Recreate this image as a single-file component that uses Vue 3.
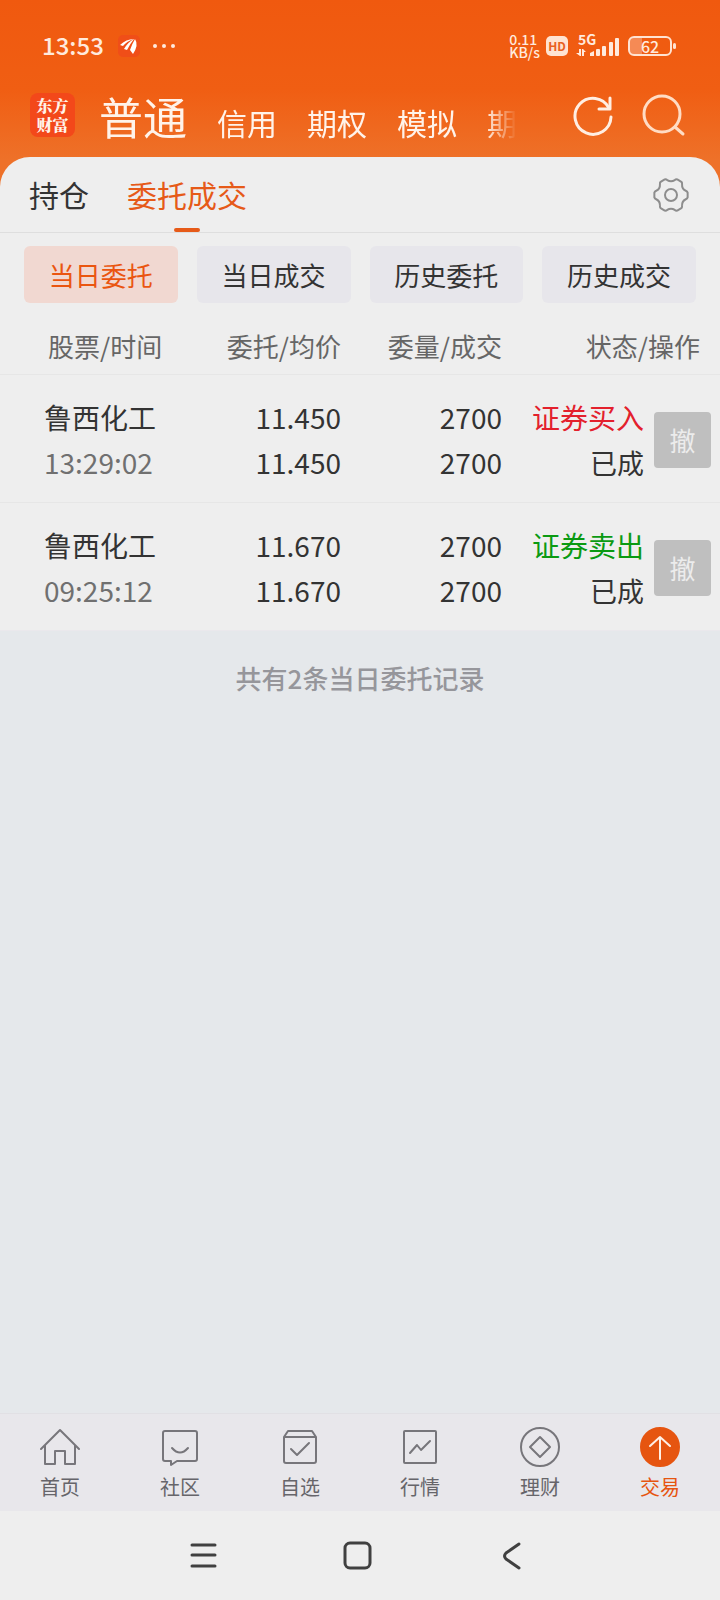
<template>
<div class="page">
<header class="top">
<div class="status">
<span class="clock">13:53</span>
<svg class="app-mark" viewBox="0 0 22 22" aria-hidden="true">
<rect width="22" height="22" rx="5" fill="#f04e18" />
<path d="M2 10Q8 4 16 4Q9 6 5 11Z M6 14Q10 7 16 4Q12 9 9 15Z M12 15Q14 9 17 4Q21 10 15 19Z" fill="#fff" />
</svg>
<svg class="dots" viewBox="0 0 24 6" aria-hidden="true">
<g fill="#ffeadd"><circle cx="3" cy="3" r="2" /><circle cx="12" cy="3" r="2" /><circle cx="21" cy="3" r="2" /></g>
</svg>
<div class="speed"><span>0.11</span><span>KB/s</span></div>
<span class="hd">HD</span>
<div class="signal">
<span class="net">5G</span>
<svg viewBox="0 0 44 20" aria-hidden="true">
<g fill="#ffeadd">
<path d="M3 13h2v7H4L0 17h3zM6 13h1l3 3H8v4H6z" />
<path d="M14 20v-3l4-2v5z" />
<rect x="20" y="13" width="4" height="7" rx="1" />
<rect x="26" y="10" width="4" height="10" rx="1" />
<rect x="33" y="6" width="4" height="14" rx="1" />
<rect x="39" y="2" width="4" height="18" rx="1" />
</g>
</svg>
</div>
<div class="battery"><span>62</span></div>
</div>

<div class="bar">
<a class="logo" href="#"><span>东方</span><span>财富</span></a>
<nav class="accounts">
<a v-for="(a, i) in accounts" :key="a" href="#" :class="{ current: i === 0 }">{{ a }}</a>
</nav>
<button class="icon-btn" aria-label="刷新">
<svg viewBox="0 0 44 44">
<path d="M40 23A18 18 0 1 1 38 14" />
<path d="M39 4V15H28" />
</svg>
</button>
<button class="icon-btn" aria-label="搜索">
<svg class="search" viewBox="0 0 44 44">
<circle cx="20" cy="20" r="18" />
<path d="M33 33L41 40" />
</svg>
</button>
</div>
</header>

<main class="sheet">
<div class="tabs">
<button v-for="t in tabs" :key="t" class="tab" :class="{ active: tab === t }" @click="tab = t">{{ t }}</button>
<button class="gear" aria-label="设置">
<svg viewBox="0 0 36 36">
<path :d="gear" />
<circle cx="18" cy="18" r="6" />
</svg>
</button>
</div>

<div class="chips">
<button v-for="f in filters" :key="f" class="chip" :class="{ active: filter === f }" @click="filter = f">{{ f }}</button>
</div>

<table class="orders">
<colgroup>
<col class="c-name" /><col class="c-price" /><col class="c-qty" /><col class="c-state" /><col class="c-op" />
</colgroup>
<thead>
<tr>
<th class="left">股票/时间</th>
<th>委托/均价</th>
<th>委量/成交</th>
<th class="last" colspan="2">状态/操作</th>
</tr>
</thead>
<tbody>
<tr v-for="o in orders" :key="o.time">
<td class="left"><div>{{ o.name }}</div><div class="time">{{ o.time }}</div></td>
<td><div>{{ o.price }}</div><div>{{ o.avg }}</div></td>
<td><div>{{ o.qty }}</div><div>{{ o.done }}</div></td>
<td><div :class="o.side">{{ o.action }}</div><div class="state">{{ o.state }}</div></td>
<td class="op"><button class="cancel" disabled>撤</button></td>
</tr>
</tbody>
</table>
</main>

<p class="note">共有{{ orders.length }}条当日委托记录</p>

<nav class="nav">
<a v-for="n in nav" :key="n.label" href="#" :class="{ on: n.on }">
<svg viewBox="0 0 40 40" aria-hidden="true">
<circle v-if="n.circle" class="ring" cx="20" cy="20" r="19" />
<path :d="n.d" />
</svg>
<span>{{ n.label }}</span>
</a>
</nav>

<div class="system">
<button aria-label="菜单"><svg viewBox="0 0 40 40"><path d="M8 10H31M8 20H31M8 31H31" /></svg></button>
<button aria-label="主屏幕"><svg viewBox="0 0 40 40"><rect x="7" y="8" width="25" height="25" rx="5" /></svg></button>
<button aria-label="返回"><svg viewBox="0 0 40 40"><path d="M27 9L14 18Q11 21 14 24L27 33" /></svg></button>
</div>
</div>
</template>

<script setup>
import { ref } from 'vue'

const accounts = ['普通', '信用', '期权', '模拟', '期货']
const tabs = ['持仓', '委托成交']
const filters = ['当日委托', '当日成交', '历史委托', '历史成交']
const tab = ref('委托成交')
const filter = ref('当日委托')

const orders = ref([
  { name: '鲁西化工', time: '13:29:02', price: '11.450', avg: '11.450', qty: 2700, done: 2700, side: 'buy', action: '证券买入', state: '已成' },
  { name: '鲁西化工', time: '09:25:12', price: '11.670', avg: '11.670', qty: 2700, done: 2700, side: 'sell', action: '证券卖出', state: '已成' }
])

const nav = [
  { label: '首页', d: 'M1 22L20 3L39 22M5 18V37H15V24H25V37H35V18' },
  { label: '社区', d: 'M5 4H35Q37 4 37 6V32Q37 34 35 34H17L11 38V34H5Q3 34 3 32V6Q3 4 5 4ZM12 21Q20 30 28 21' },
  { label: '自选', d: 'M4 10L8 4H32L36 10V34Q36 36 34 36H6Q4 36 4 34ZM4 10H36M11 22L17 28L29 16' },
  { label: '行情', d: 'M5 4H35Q36 4 36 5V35Q36 36 35 36H5Q4 36 4 35V5Q4 4 5 4ZM10 26L17 18L21 23L30 14' },
  { label: '理财', circle: true, d: 'M20 10L30 20L20 30L10 20Z' },
  { label: '交易', circle: true, on: true, d: 'M20 32V10M10 19L20 10L30 19' }
]

// six flat teeth with curved valleys, around the centre of a 36x36 box
const polar = (deg, r) => {
  const t = (deg * Math.PI) / 180
  return (18 + r * Math.cos(t)).toFixed(2) + ' ' + (18 + r * Math.sin(t)).toFixed(2)
}
const gear = 'M' + polar(-8, 16.8) + [0, 60, 120, 180, 240, 300].map(a =>
  'L' + polar(a + 8, 16.8) + 'Q' + polar(a + 13, 16.6) + ' ' + polar(a + 16, 15.4) +
  'Q' + polar(a + 30, 12.4) + ' ' + polar(a + 44, 15.4) + 'Q' + polar(a + 47, 16.6) + ' ' + polar(a + 52, 16.8)
).join('') + 'Z'
</script>

<style>
body { margin:0; background:#e5e8eb }
</style>

<style scoped>
.page { min-height:100vh; display:flex; flex-direction:column; background:linear-gradient(#f0590f, #f05e13 90px, #ee7129 160px, #ee7129 200px, #e5e8eb 200px); font-family:"Noto Sans CJK SC", sans-serif; color:#333 }
button { border:0; padding:0; background:none; font:inherit; color:inherit }
a { color:inherit; text-decoration:none }
svg { display:block; fill:none; stroke-linecap:round; stroke-linejoin:round }

.top { color:#fff3ea }
.status { display:flex; align-items:center; height:28px; padding:32px 48px 0 42px; color:#ffeadd }
.clock { font-size:24px; line-height:26px; margin-bottom:2px; font-weight:500 }
.app-mark { width:22px; height:22px; margin-left:14px }
.dots { width:24px; height:6px; margin:0 auto 0 12px }
.speed { display:flex; flex-direction:column; font-size:14px; line-height:13px; font-weight:500 }
.hd { margin-left:6px; width:22px; border-radius:5px; background:#ffe3d2; color:#e9601f; font-size:12px; line-height:20px; font-weight:700; text-align:center }
.signal { position:relative; margin-left:8px }
.signal svg { width:44px; height:20px }
.net { position:absolute; left:2px; top:-4px; font-size:14px; line-height:14px; font-weight:700 }
.battery { position:relative; box-sizing:border-box; width:44px; height:20px; margin-left:8px; border:2px solid #ffe3d2; border-radius:6px; background:linear-gradient(90deg, #f58a55 12px, transparent 12px); font-size:16px; line-height:16px; font-weight:500; text-align:center }
.battery::after { content:""; position:absolute; right:-6px; top:5px; width:3px; height:6px; border-radius:2px; background:#ffe3d2 }

.bar { display:flex; align-items:center; height:97px; padding:0 34px 0 30px }
.logo { display:flex; flex-direction:column; align-items:center; justify-content:center; width:45px; height:44px; margin-top:12px; border-radius:8px; background:#f3481a; font-family:"Noto Serif CJK SC", "Noto Sans CJK SC", serif; font-size:16px; line-height:19px; font-weight:900 }
.accounts { flex:1; min-width:0; display:flex; align-items:baseline; gap:30px; margin:20px 0 0 24px; overflow:hidden; white-space:nowrap; font-size:30px; line-height:64px; -webkit-mask-image:linear-gradient(90deg, #000 calc(100% - 32px), transparent); mask-image:linear-gradient(90deg, #000 calc(100% - 32px), transparent) }
.accounts .current { font-size:44px }
.icon-btn { width:44px; height:44px; margin:14px 0 0 27px }
.accounts + .icon-btn { margin-left:54px }
.icon-btn svg { width:44px; height:44px; stroke:#ffeee2; stroke-width:3 }
.icon-btn .search { stroke:#ffdcc4 }

.sheet { background:#eee; border-radius:30px 30px 0 0; overflow:hidden }
.tabs { display:flex; align-items:center; gap:38px; height:75px; padding:0 31px 0 29px; border-bottom:1px solid #dedede }
.tab { position:relative; height:75px; font-size:30px; line-height:75px }
.tab.active { color:#e65a18 }
.tab.active::after { content:""; position:absolute; left:50%; bottom:0; width:26px; height:4px; margin-left:-13px; border-radius:2px; background:#e65a18 }
.gear { margin-left:auto }
.gear svg { width:36px; height:36px; stroke:#8d8d8d; stroke-width:2 }

.chips { display:flex; gap:19px; padding:13px 24px 0 }
.chip { flex:1; height:57px; border-radius:6px; background:#e7e6eb; font-size:26px; line-height:57px }
.chip.active { background:#f1d8d1; color:#ea5510 }

.orders { width:100%; table-layout:fixed; border-collapse:collapse }
.c-qty { width:161px }
.c-state { width:142px }
.c-op { width:76px }
.c-price { width:161px }
th { height:56px; padding:15px 0 0; border-bottom:1px solid #e6e6e6; font-size:26px; line-height:30px; font-weight:400; color:#666; text-align:right; white-space:nowrap }
th.left { padding-left:48px; text-align:left }
th.last { padding-right:20px }
td { padding:20px 0 17px; border-bottom:1px solid #e6e6e6; font-size:28px; line-height:45px; text-align:right; white-space:nowrap }
td.left { padding-left:44px; text-align:left }
tbody tr:last-child td { border-bottom-color:#eae8ec }
.time { color:#707070 }
.buy { color:#e3202c }
.sell { color:#0a9a12 }
.state { font-size:27px }
.op { padding-right:9px }
.cancel { display:block; width:57px; height:56px; margin-left:auto; border-radius:4px; background:#bfbfbf; color:#ececec; font-size:26px; line-height:56px }

.note { margin:0 0 auto; padding-top:28px; font-size:26px; line-height:38px; font-weight:500; color:#96969b; text-align:center }

.nav { display:flex; padding:13px 0 12px; border-top:1px solid #e1e0e4; background:#e8e7eb; color:#66656a }
.nav a { flex:1; display:flex; flex-direction:column; align-items:center; gap:8px; font-size:20px; line-height:24px }
.nav svg { width:40px; height:40px; stroke:#77767b; stroke-width:2 }
.nav .on { color:#e65510 }
.nav .on svg { stroke:#fff0e6 }
.nav .on .ring { fill:#e65510; stroke:#e65510 }

.system { display:flex; justify-content:center; gap:114px; padding:24px 4px 25px 0; background:#eee }
.system svg { width:40px; height:40px; stroke:#404040; stroke-width:3 }
</style>
